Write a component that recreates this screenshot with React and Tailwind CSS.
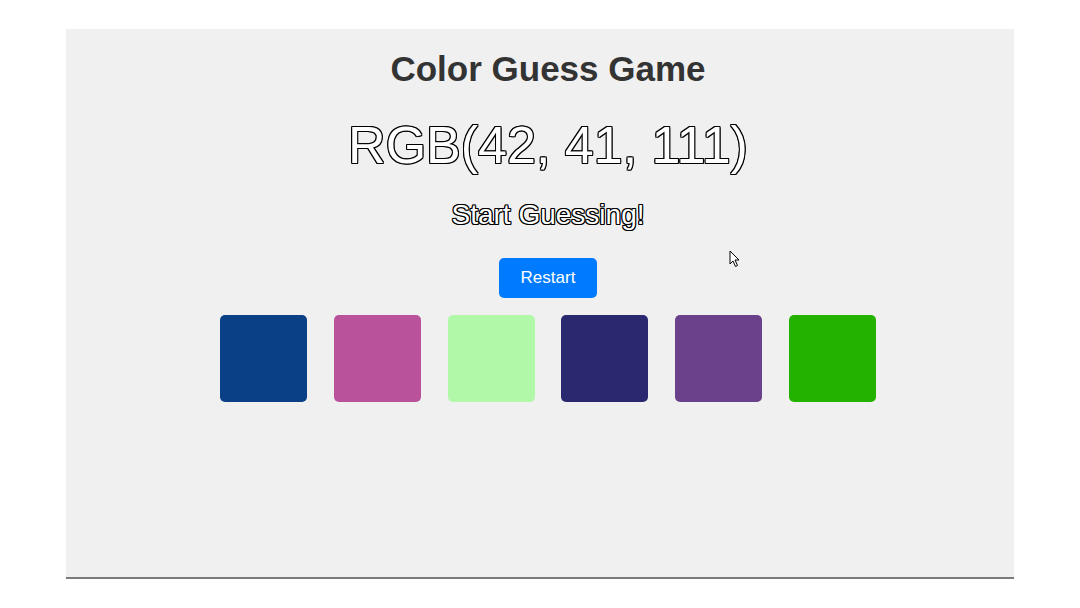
const squares = ['#0a4186', '#b9529a', '#b1f8a8', '#2a296f', '#6c418c', '#24b200']

const outline =
  '[text-shadow:1px_0_0_#000,-1px_0_0_#000,0_1px_0_#000,0_-1px_0_#000,1px_1px_0_#000,-1px_-1px_0_#000,1px_-1px_0_#000,-1px_1px_0_#000]'

export default function App() {
  return (
    <div className="w-[1080px] h-[608px] bg-white relative antialiased font-['Liberation_Sans',Arial,sans-serif]">
      <div className="absolute left-[66px] top-[29px] w-[948px] h-[550px] bg-[#f0f0f0] border-b-2 border-[#7a7a7a]">
        <div className="flex flex-col items-center pl-4 pt-[20px]">
          <h1 className="text-[35px] leading-[40px] font-bold text-[#333]">Color Guess Game</h1>
          <div className={`mt-[26px] text-[52px] leading-[60px] text-white ${outline}`}>
            RGB(42, 41, 111)
          </div>
          <p className={`mt-[24px] text-[28px] leading-[32px] text-white ${outline}`}>
            Start Guessing!
          </p>
          <button className="mt-[27px] w-[98px] h-[40px] rounded-[5px] bg-[#007bff] text-white text-[17px]">
            Restart
          </button>
          <div className="mt-[17px] flex gap-[26.8px]">
            {squares.map((c) => (
              <div key={c} className="w-[87px] h-[87px] rounded-[5px]" style={{ backgroundColor: c }} />
            ))}
          </div>
        </div>
      </div>
      <svg className="absolute left-[729px] top-[250px]" width="12" height="18" viewBox="0 0 12 18">
        <path d="M1 1 L1 14 L4 11 L6.5 16.5 L8.5 15.5 L6 10 L10 10 Z" fill="#fff" stroke="#000" strokeWidth="1" />
      </svg>
    </div>
  )
}
